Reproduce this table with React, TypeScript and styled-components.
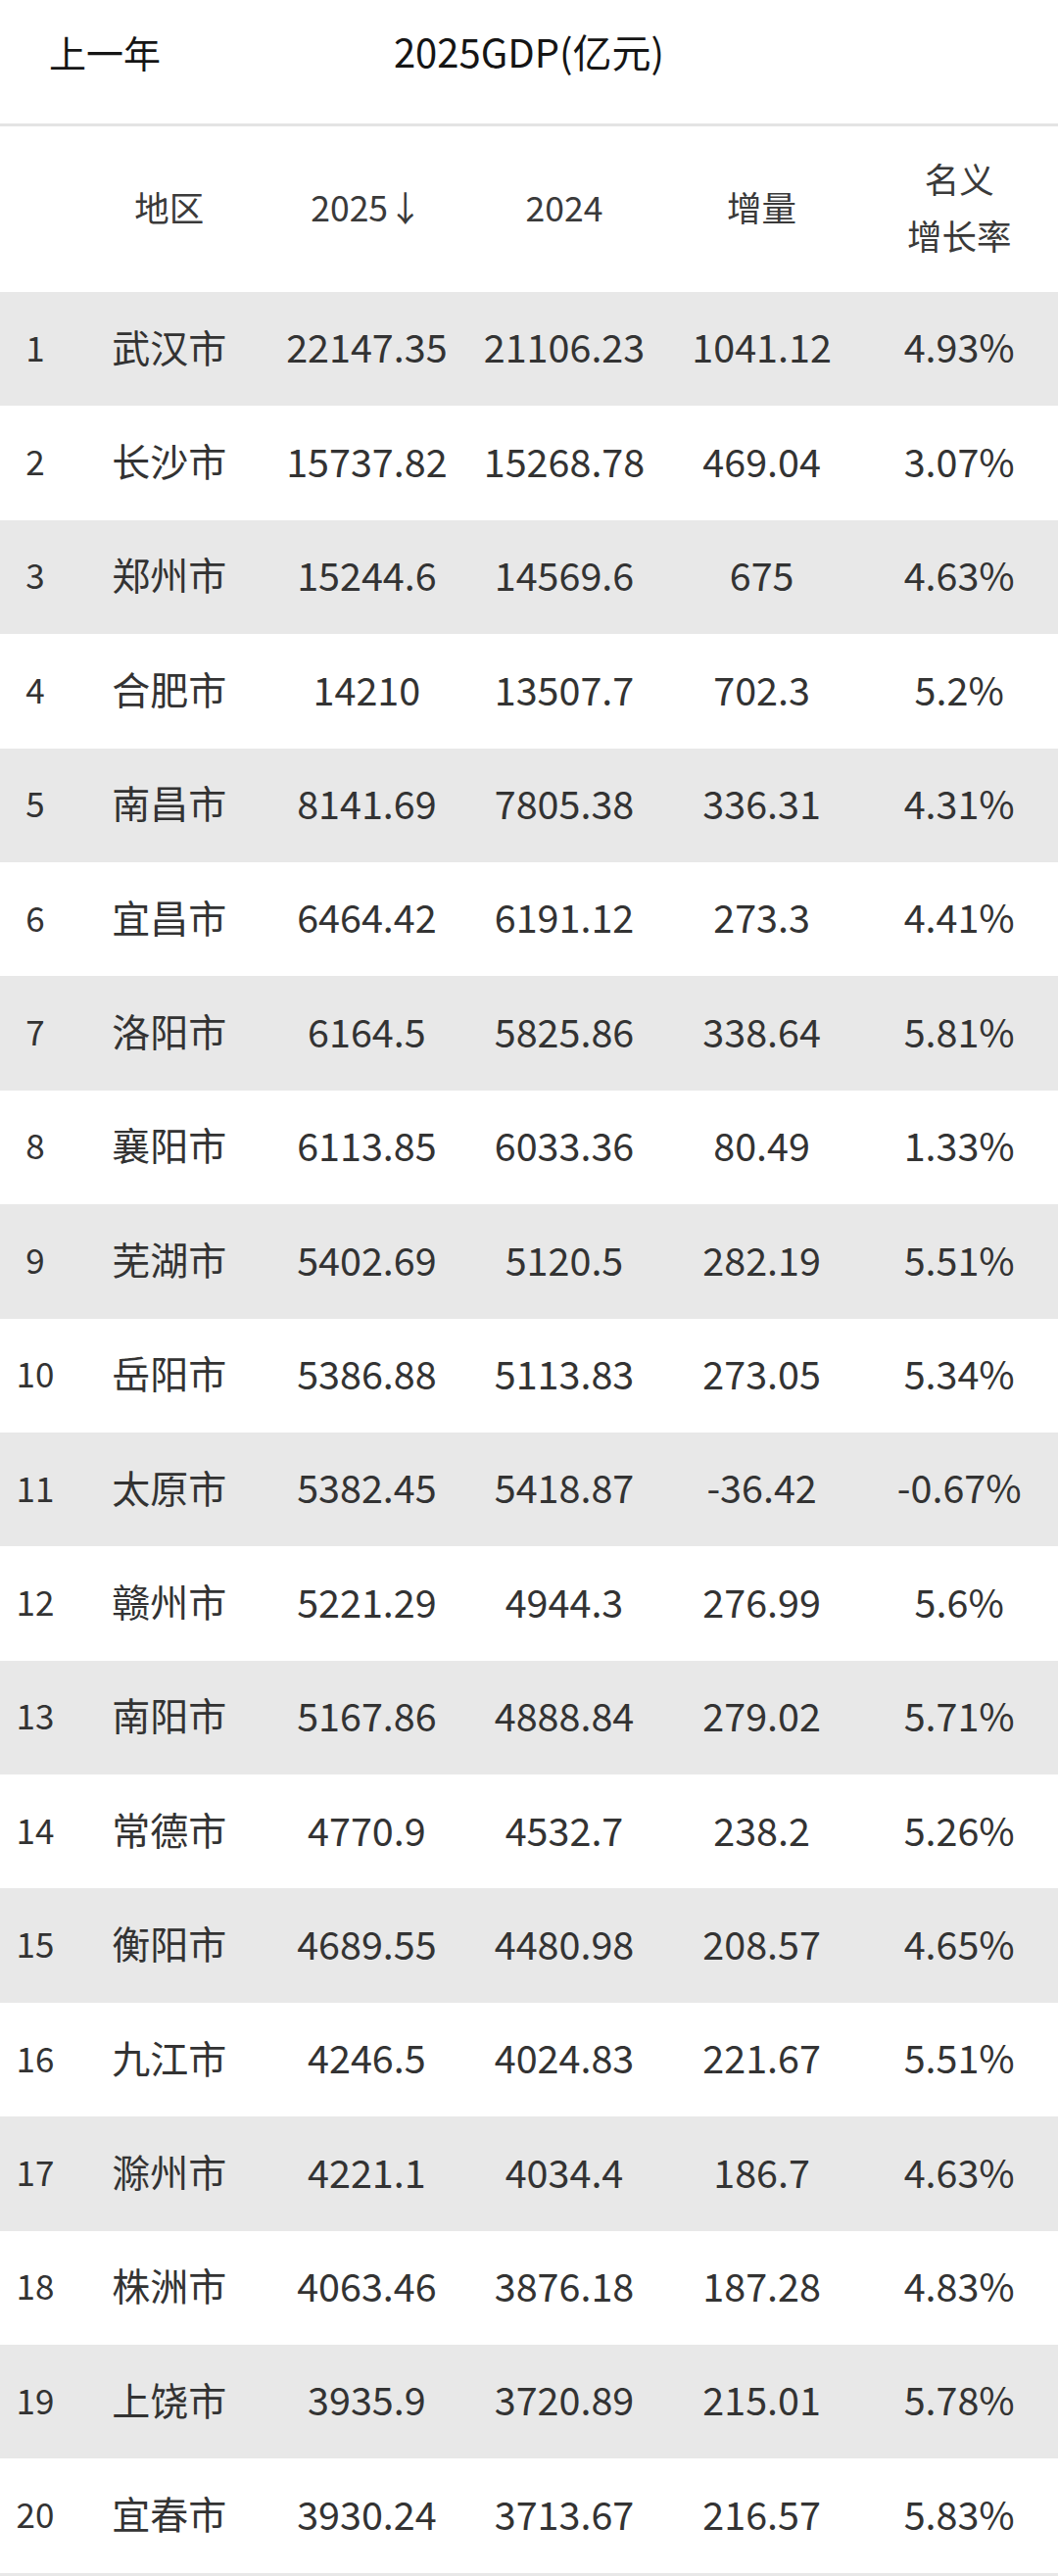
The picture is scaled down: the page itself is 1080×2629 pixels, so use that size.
import React from "react";
import styled, { createGlobalStyle } from "styled-components";

const GlobalStyle = createGlobalStyle`
  html, body {
    margin: 0;
    padding: 0;
    background: #fff;
  }
  body {
    font-family: "Noto Sans CJK SC", "Noto Sans", sans-serif;
    color: #333;
  }
`;

type Row = {
  city: string
  y2025: string
  y2024: string
  diff: string
  rate: string
}

const rows: Row[] = [
  { city: "武汉市", y2025: "22147.35", y2024: "21106.23", diff: "1041.12", rate: "4.93%" },
  { city: "长沙市", y2025: "15737.82", y2024: "15268.78", diff: "469.04", rate: "3.07%" },
  { city: "郑州市", y2025: "15244.6", y2024: "14569.6", diff: "675", rate: "4.63%" },
  { city: "合肥市", y2025: "14210", y2024: "13507.7", diff: "702.3", rate: "5.2%" },
  { city: "南昌市", y2025: "8141.69", y2024: "7805.38", diff: "336.31", rate: "4.31%" },
  { city: "宜昌市", y2025: "6464.42", y2024: "6191.12", diff: "273.3", rate: "4.41%" },
  { city: "洛阳市", y2025: "6164.5", y2024: "5825.86", diff: "338.64", rate: "5.81%" },
  { city: "襄阳市", y2025: "6113.85", y2024: "6033.36", diff: "80.49", rate: "1.33%" },
  { city: "芜湖市", y2025: "5402.69", y2024: "5120.5", diff: "282.19", rate: "5.51%" },
  { city: "岳阳市", y2025: "5386.88", y2024: "5113.83", diff: "273.05", rate: "5.34%" },
  { city: "太原市", y2025: "5382.45", y2024: "5418.87", diff: "-36.42", rate: "-0.67%" },
  { city: "赣州市", y2025: "5221.29", y2024: "4944.3", diff: "276.99", rate: "5.6%" },
  { city: "南阳市", y2025: "5167.86", y2024: "4888.84", diff: "279.02", rate: "5.71%" },
  { city: "常德市", y2025: "4770.9", y2024: "4532.7", diff: "238.2", rate: "5.26%" },
  { city: "衡阳市", y2025: "4689.55", y2024: "4480.98", diff: "208.57", rate: "4.65%" },
  { city: "九江市", y2025: "4246.5", y2024: "4024.83", diff: "221.67", rate: "5.51%" },
  { city: "滁州市", y2025: "4221.1", y2024: "4034.4", diff: "186.7", rate: "4.63%" },
  { city: "株洲市", y2025: "4063.46", y2024: "3876.18", diff: "187.28", rate: "4.83%" },
  { city: "上饶市", y2025: "3935.9", y2024: "3720.89", diff: "215.01", rate: "5.78%" },
  { city: "宜春市", y2025: "3930.24", y2024: "3713.67", diff: "216.57", rate: "5.83%" },
]

const Page = styled.div`
  width: 1080px;
`

const TitleBar = styled.header`
  display: grid;
  grid-template-columns: 1fr auto 1fr;
  align-items: center;
  height: 129px;
  padding-bottom: 22px;
  box-sizing: border-box;
  border-bottom: 3px solid #e4e4e4;
  color: #151515;
  font-size: 38px;
`

const BackLabel = styled.div`
  padding-left: 50px;
`

const Title = styled.div`
  text-align: center;
  font-size: 40px;
`

const Grid = styled.div<{ $height: number; $shade?: boolean }>`
  display: grid;
  grid-template-columns: 72px repeat(5, 1fr);
  align-items: center;
  height: ${(p) => p.$height}px;
  padding-bottom: 6px;
  box-sizing: border-box;
  background: ${(p) => (p.$shade ? "#e8e8e8" : "#fff")};
`

const HeadCell = styled.div`
  text-align: center;
  font-size: 35.5px;
  line-height: 58px;
  color: #3a3a3a;
`

const Cell = styled.div<{ $size?: number }>`
  text-align: center;
  font-size: ${(p) => p.$size ?? 39.5}px;
  line-height: 1;
  color: #333;
  white-space: nowrap;
`

const Table = styled.div`
  border-bottom: 3px solid #e8e8e8;
`

export default function App() {
  return (
    <Page>
      <GlobalStyle />
      <TitleBar>
        <BackLabel>上一年</BackLabel>
        <Title>2025GDP(亿元)</Title>
        <div />
      </TitleBar>
      <Table>
        <Grid $height={169}>
          <HeadCell />
          <HeadCell>地区</HeadCell>
          <HeadCell>2025↓</HeadCell>
          <HeadCell>2024</HeadCell>
          <HeadCell>增量</HeadCell>
          <HeadCell>
            名义
            <br />
            增长率
          </HeadCell>
        </Grid>
        {rows.map((r, i) => (
          <Grid key={r.city} $height={116.4} $shade={i % 2 === 0}>
            <Cell $size={35}>{i + 1}</Cell>
            <Cell $size={39}>{r.city}</Cell>
            <Cell>{r.y2025}</Cell>
            <Cell>{r.y2024}</Cell>
            <Cell>{r.diff}</Cell>
            <Cell>{r.rate}</Cell>
          </Grid>
        ))}
      </Table>
    </Page>
  )
}
